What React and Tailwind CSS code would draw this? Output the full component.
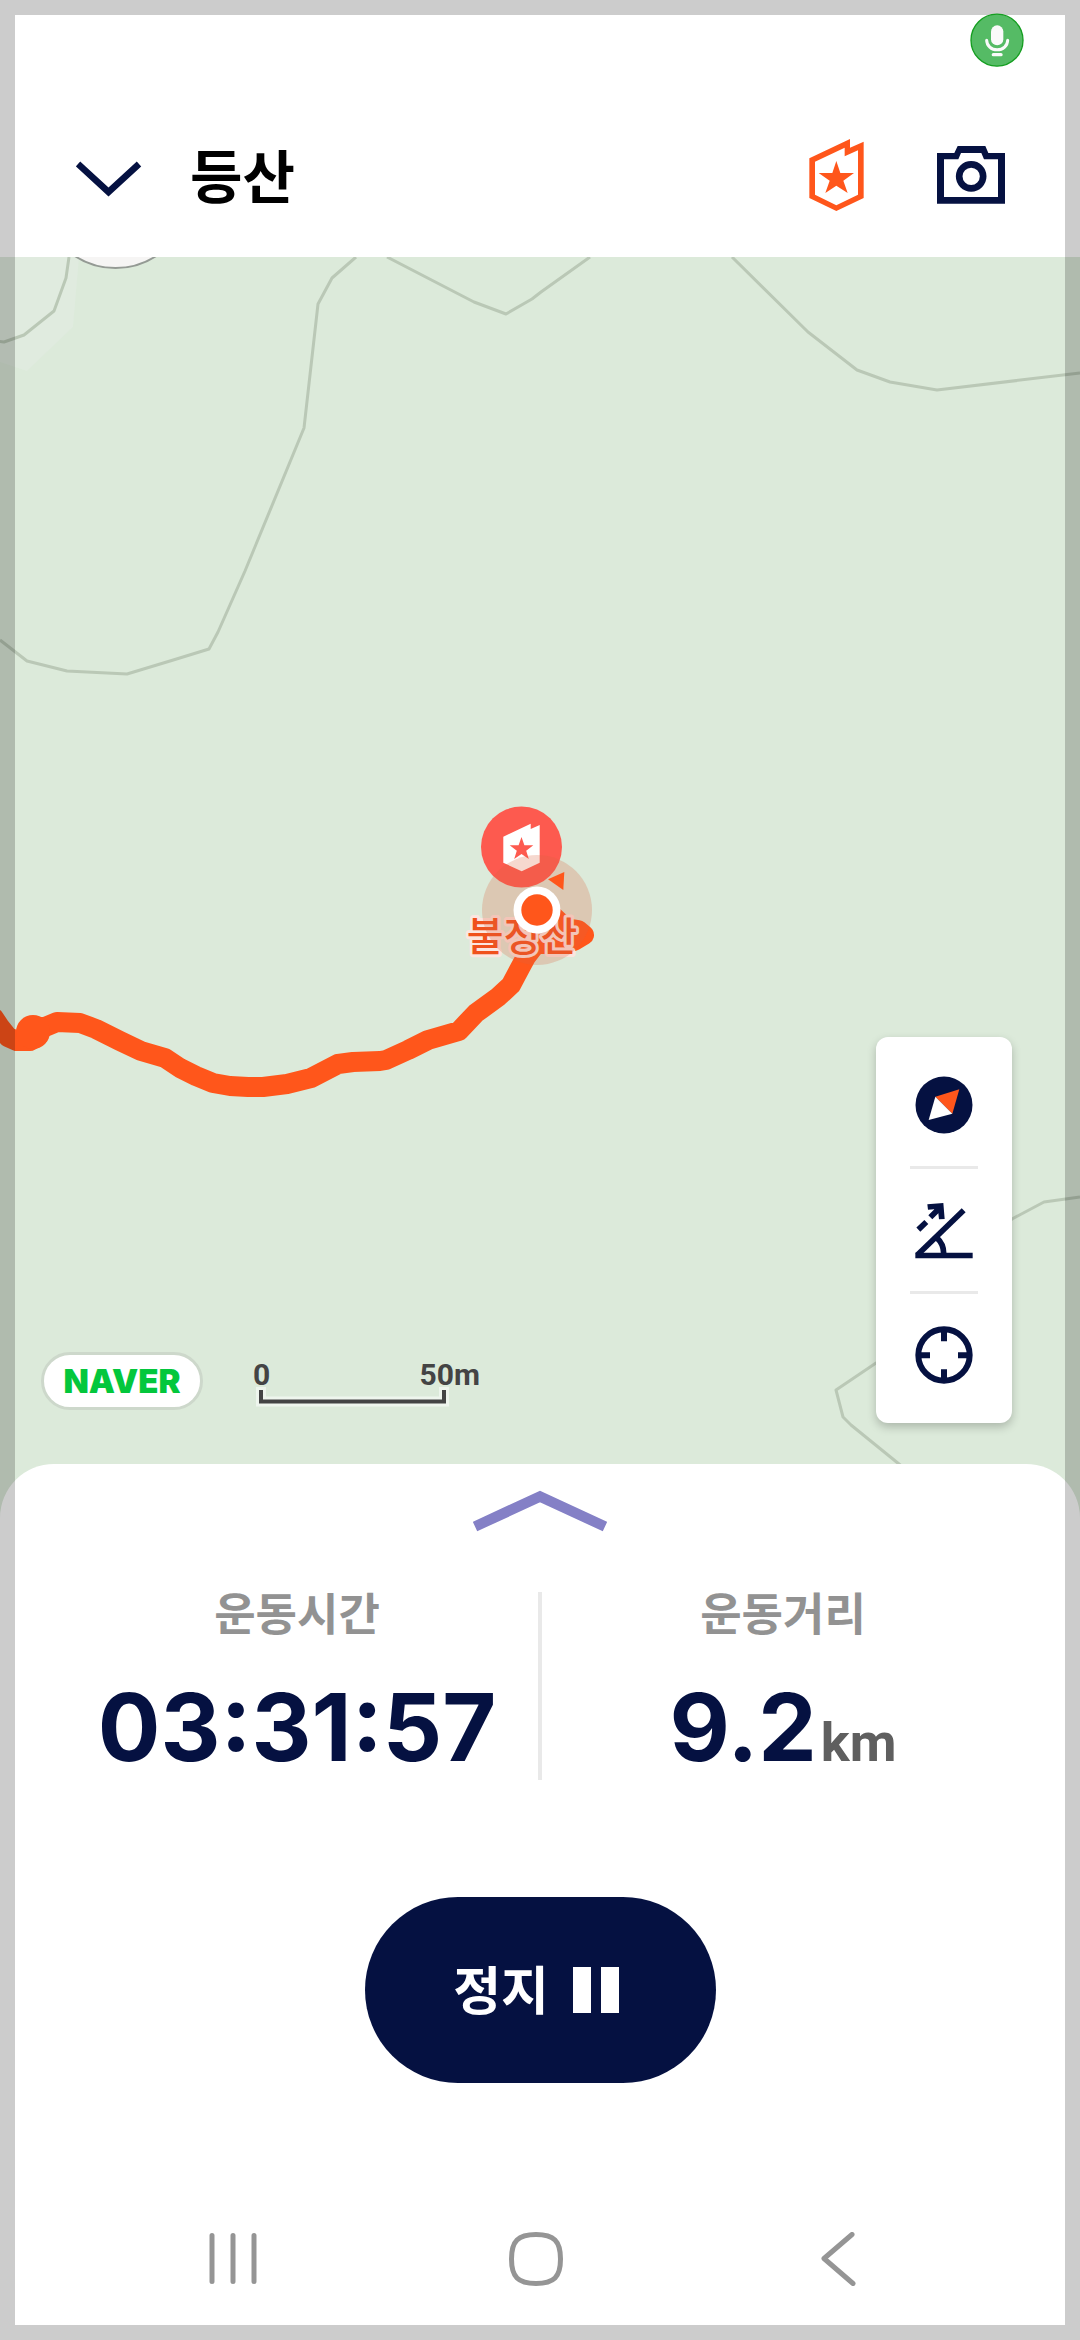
import React from "react";

const NAVY = "#051141";
const ORANGE = "#ff561b";

const contours = [
  "69,257 66,278 54,311 24,335 4,342 -4,341",
  "356,257 332,278 318,304 304,428 245,571 218,632 209,649 170,661 127,674 67,671 27,661 0,640",
  "387,257 474,302 506,314 532,299 541,292 590,257",
  "732,257 808,332 857,370 890,382 937,390 1080,373",
  "1080,1197 1044,1202 1012,1219 960,1262 900,1350 876,1363 836,1390 843,1417 851,1425 899,1464 940,1500",
];

const trail =
  "-6,1018 0,1027 8,1037 17,1041 30,1041 38,1036 36,1027 45,1027 57,1022 80,1023 96,1029 120,1041 141,1051 165,1058 180,1068 196,1076 213,1083 230,1086 248,1087 263,1087 287,1084 311,1078 338,1064 353,1062 380,1061 386,1060 408,1050 428,1040 459,1031 476,1013 498,997 511,985 520,968 526,957 536,944 554,944 574,941 584,935 578,930 566,928 552,915 540,905";

function MapCanvas() {
  return (
    <svg
      className="absolute inset-0 h-full w-full"
      viewBox="0 257 1080 1261"
      preserveAspectRatio="xMidYMid slice"
      role="img"
      aria-label="등산 지도"
    >
      <rect y="257" width="1080" height="1261" fill="#dceada" />
      <polygon points="0,257 79,257 73,327 27,371 0,362" fill="#e0ebdf" />
      <g fill="none" stroke="#bac8b6" strokeWidth="3" strokeLinejoin="round">
        {contours.map((points) => (
          <polyline key={points} points={points} />
        ))}
      </g>
      <circle cx="115.5" cy="194" r="74" fill="#f6f5f4" stroke="#949a94" strokeWidth="2" />
      <polyline
        points={trail}
        fill="none"
        stroke={ORANGE}
        strokeWidth="20"
        strokeLinejoin="round"
        strokeLinecap="round"
      />
      <circle cx="33" cy="1032" r="17" fill={ORANGE} />
      <circle cx="521.5" cy="847" r="40.5" fill="#fd5a4f" />
      <path
        d="M503.3 836.7 530.7 823.7V829L539.7 825V862.7L521.7 871.3 503.3 862.7Z"
        fill="#fff"
      />
      <path
        d="M521.5 837 524.4 845.3H533.3L526.2 850.8 528.8 859 521.5 854 514.2 859 516.8 850.8 509.7 845.3H518.6Z"
        fill="#fd5a4f"
      />
      <text
        x="522"
        y="951"
        textAnchor="middle"
        className="font-['Noto_Sans_CJK_KR',sans-serif] text-[40px] font-medium"
        fill="#f0511c"
        stroke="#fbe6e0"
        strokeWidth="6"
        strokeLinejoin="round"
        paintOrder="stroke"
      >
        불정산
      </text>
      <circle cx="537" cy="910" r="55" fill="rgb(220,98,62)" fillOpacity="0.25" />
      <path d="M548 879.3 564.3 872 563.3 890Z" fill={ORANGE} />
      <circle cx="537" cy="910" r="23.5" fill="#fff" />
      <circle cx="537" cy="910" r="15.7" fill={ORANGE} />
    </svg>
  );
}

function MicBadge() {
  return (
    <svg className="h-[54px] w-[54px]" viewBox="811 38 162 162" role="img" aria-label="마이크 사용 중">
      <circle cx="892" cy="119.5" r="78" fill="#55bb65" stroke="#149e20" strokeWidth="4" />
      <rect x="874" y="75" width="37" height="60" rx="18.5" fill="#fafafa" />
      <path d="M861 120a31.500 28.500 0 0 0 63 0" fill="none" stroke="#fafafa" strokeWidth="9" strokeLinecap="round" />
      <rect x="876" y="158" width="33" height="10" rx="5" fill="#fafafa" />
    </svg>
  );
}

function FlagIcon() {
  return (
    <svg className="h-[72px] w-[55px]" viewBox="327 420 165 216">
      <path
        fillRule="evenodd"
        fill={ORANGE}
        d="M328 478 450 420V446L491 428V597L409 636 328 597ZM345 488V587L409 619 474 587V454L434 472V446Z"
      />
      <path
        fill={ORANGE}
        d="M409 486 421 522H462L430 545 443 582 409 560 376 582 389 545 356 522H397Z"
      />
    </svg>
  );
}

function CameraIcon() {
  return (
    <svg className="h-[58px] w-[68px]" viewBox="712 435 204 174">
      <path
        fillRule="evenodd"
        fill={NAVY}
        d="M712 456H764L774 435H857L866 456H916V608H712ZM733 475V588H895V475H853L845 456H784L776 475Z"
      />
      <circle cx="814.500" cy="526" r="36" fill="none" stroke={NAVY} strokeWidth="20" />
    </svg>
  );
}

function CompassIcon() {
  return (
    <svg className="size-[58px]" viewBox="195 168 174 174">
      <circle cx="282" cy="255" r="85.500" fill={NAVY} />
      <path d="M328 208 256 230 307 281Z" fill={ORANGE} />
      <path d="M236 300 256 230 307 281Z" fill="#fff" />
    </svg>
  );
}

function SlopeIcon() {
  return (
    <svg className="size-[58px]" viewBox="195 543 174 174">
      <g fill="none" stroke={NAVY} strokeWidth="17">
        <path d="M196 706.500H368" />
        <path d="M202 705 341 571" />
        <path d="M260 653Q281 672 281 700" />
        <path d="M205 629 229 606M241 592 266 567" />
      </g>
      <path d="M232 553 280 549 284 597 267 598 265 580 252 568 234 569Z" fill={NAVY} />
    </svg>
  );
}

function TargetIcon() {
  return (
    <svg className="size-[58px]" viewBox="195 917 174 174">
      <g fill="none" stroke={NAVY} strokeWidth="18">
        <circle cx="282" cy="1004" r="77" />
        <path d="M282 930V963M282 1047V1080M205 1004.500H240M324 1004.500H360" />
      </g>
    </svg>
  );
}

const tools = [
  { label: "나침반", Icon: CompassIcon },
  { label: "경사도", Icon: SlopeIcon },
  { label: "현재 위치", Icon: TargetIcon },
];

function MapTools() {
  return (
    <div className="flex w-[136px] flex-col rounded-xl bg-white py-[7px] shadow-[0_4px_10px_rgba(0,0,0,0.22)]">
      {tools.map(({ label, Icon }, i) => (
        <React.Fragment key={label}>
          {i > 0 && <div className="mx-auto h-[3px] w-[68px] bg-[#e9e9e9]" />}
          <button type="button" aria-label={label} className="flex h-[122px] items-center justify-center">
            <Icon />
          </button>
        </React.Fragment>
      ))}
    </div>
  );
}

function ScaleBar() {
  return (
    <div className="w-[227px] font-[Roboto,sans-serif] text-[30px] leading-6 font-bold text-[#444]">
      <div className="flex justify-between">
        <span>0</span>
        <span>50m</span>
      </div>
      <svg className="ml-[3px] h-5 w-[193px]" viewBox="0 0 193 20" fill="none">
        <path d="M5 0V14.500H188V0" stroke="#eef5ed" strokeWidth="10" />
        <path d="M5 3V14.500H188V3" stroke="#444" strokeWidth="4" />
      </svg>
    </div>
  );
}

export default function App() {
  return (
    <div className="relative flex min-h-screen flex-col bg-white font-['Noto_Sans_CJK_KR',sans-serif]">
      <header>
        <div className="relative z-20 flex h-[92px] justify-end pt-[13px] pr-[56px]">
          <MicBadge />
        </div>
        <div className="flex h-[165px] items-center pr-[75px] pl-[76px]">
          <button type="button" aria-label="접기">
            <svg className="mt-2 h-9 w-[66px]" viewBox="0 0 66 36" fill="none">
              <path d="M2 3 32.500 31 63 3" stroke={NAVY} strokeWidth="6.500" />
            </svg>
          </button>
          <h1 className="ml-12 pb-1 text-[57px] leading-[72px] font-bold text-black">등산</h1>
          <div className="ml-auto flex items-center gap-[73px]">
            <button type="button" aria-label="인증">
              <FlagIcon />
            </button>
            <button type="button" aria-label="카메라">
              <CameraIcon />
            </button>
          </div>
        </div>
      </header>

      <main className="relative flex flex-1 items-end justify-between pr-[68px] pb-[95px] pl-[41px]">
        <MapCanvas />
        <div className="relative flex items-end gap-[50px] pb-[13px]">
          <div className="flex h-[58px] w-[162px] items-center justify-center rounded-full border-[3px] border-[#cdd8cb] bg-white font-[Inter,sans-serif] text-[33px] leading-none font-black text-[#03c73c]">
            NAVER
          </div>
          <div className="pb-[3px]">
            <ScaleBar />
          </div>
        </div>
        <div className="relative">
          <MapTools />
        </div>
      </main>

      <section className="relative -mt-[54px] flex flex-col rounded-t-[54px] bg-white pt-[25px] pb-4">
        <button type="button" aria-label="펼치기" className="mx-auto">
          <svg className="h-[43px] w-[134px]" viewBox="0 0 134 43" fill="none">
            <path d="M2 37.500 67 7.500 132 37.500" stroke="#8480c6" strokeWidth="10.500" />
          </svg>
        </button>

        <dl className="mt-[60px] flex px-[56px] text-center">
          <div className="flex-1 pb-[3px]">
            <dt className="text-[45px] leading-10 font-bold text-[#929292]">운동시간</dt>
            <dd className="mt-[45px] font-[Inter,sans-serif] text-[93px] leading-[100px] font-bold text-[#051141]">
              03:31:57
            </dd>
          </div>
          <div className="w-1 bg-[#e9e9e9]" />
          <div className="flex-1 pb-[3px]">
            <dt className="text-[45px] leading-10 font-bold text-[#929292]">운동거리</dt>
            <dd className="mt-[45px] flex items-baseline justify-center gap-1 font-[Inter,sans-serif] text-[93px] leading-[100px] font-bold text-[#051141]">
              9.2
              <span className="font-[Roboto,sans-serif] text-[54px] leading-none text-[#5f5f5f]">km</span>
            </dd>
          </div>
        </dl>

        <button
          type="button"
          className="mx-auto mt-[117px] flex h-[186px] w-[351px] items-center justify-center gap-6 rounded-full bg-[#051141] pr-2 text-[52px] leading-none font-bold text-white"
        >
          <span className="pb-1">정지</span>
          <span className="flex gap-[10px]">
            <span className="h-[46px] w-[18px] bg-white" />
            <span className="h-[46px] w-[18px] bg-white" />
          </span>
        </button>

        <nav className="mt-[111px] flex h-[130px] items-center justify-between pr-[189px] pl-[180px]">
          <button type="button" aria-label="최근 앱" className="flex w-[106px] justify-center">
            <svg className="size-[54px]" viewBox="0 0 54 54" stroke="#959595" strokeWidth="5" strokeLinecap="round">
              <path d="M6 3.500V49.500M27 3.500V49.500M48 3.500V49.500" />
            </svg>
          </button>
          <button type="button" aria-label="홈" className="flex w-[106px] justify-center">
            <svg className="size-[54px]" viewBox="0 0 54 54" fill="none" stroke="#959595" strokeWidth="5">
              <path d="M27 2.500C45 2.500 51.500 9 51.500 27S45 51.500 27 51.500 2.500 45 2.500 27 9 2.500 27 2.500Z" />
            </svg>
          </button>
          <button type="button" aria-label="뒤로" className="flex w-[106px] justify-center">
            <svg
              className="size-[54px]"
              viewBox="0 0 54 54"
              fill="none"
              stroke="#959595"
              strokeWidth="5"
              strokeLinecap="round"
              strokeLinejoin="round"
            >
              <path d="M41 2.500 13 26.500 42 51.500" />
            </svg>
          </button>
        </nav>
      </section>

      <div className="pointer-events-none absolute inset-0 z-10 border-[15px] border-black/20" />
    </div>
  );
}
